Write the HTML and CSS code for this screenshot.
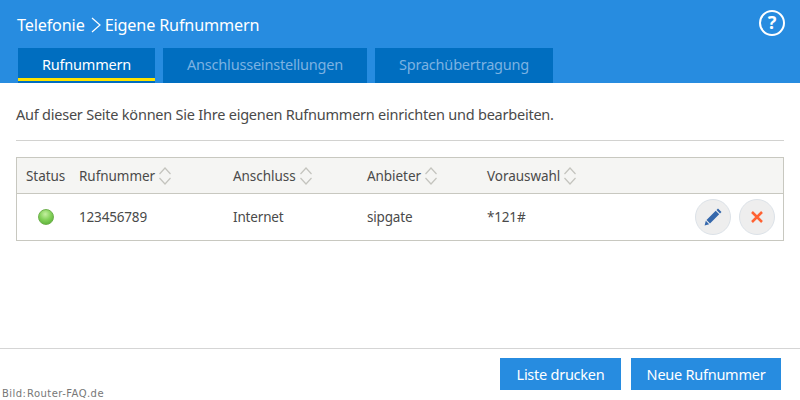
FILE: index.html
```html
<!DOCTYPE html>
<html lang="de">
<head>
<meta charset="utf-8">
<title>Eigene Rufnummern</title>
<link rel="stylesheet" href="styles.css">
</head>
<body>
<div class="page">
  <header class="header">
    <div class="title-row">
      <h1 class="title">Telefonie
        <svg class="crumb" width="12" height="18" viewBox="0 0 12 18"><path d="M3 2l8 7-8 7" fill="none" stroke="#fff" stroke-width="1.200"/></svg>
        Eigene Rufnummern</h1>
      <svg class="help" width="28" height="28" viewBox="0 0 28 28"><circle cx="14" cy="14" r="12" fill="none" stroke="#fff" stroke-width="2"/><text x="14" y="20" text-anchor="middle" class="help-mark">?</text></svg>
    </div>
    <nav class="tabs">
      <a class="tab tab-active tab-a">Rufnummern</a>
      <a class="tab tab-b">Anschlusseinstellungen</a>
      <a class="tab tab-c">Sprachübertragung</a>
    </nav>
  </header>
  <main class="content">
    <p class="intro">Auf dieser Seite können Sie Ihre eigenen Rufnummern einrichten und bearbeiten.</p>
    <div class="rule"></div>
    <div class="table">
      <div class="row row-head">
        <div class="cell c-status">Status</div>
        <div class="cell c-num">Rufnummer<svg class="sort" width="14" height="20" viewBox="0 0 14 20"><path d="M1.500 8l5.500-6 5.500 6M1.500 12l5.500 6 5.500-6" fill="none" stroke="#c4c4be" stroke-width="1.200"/></svg></div>
        <div class="cell c-port">Anschluss<svg class="sort" width="14" height="20" viewBox="0 0 14 20"><path d="M1.500 8l5.500-6 5.500 6M1.500 12l5.500 6 5.500-6" fill="none" stroke="#c4c4be" stroke-width="1.200"/></svg></div>
        <div class="cell c-prov">Anbieter<svg class="sort" width="14" height="20" viewBox="0 0 14 20"><path d="M1.500 8l5.500-6 5.500 6M1.500 12l5.500 6 5.500-6" fill="none" stroke="#c4c4be" stroke-width="1.200"/></svg></div>
        <div class="cell c-pre">Vorauswahl<svg class="sort" width="14" height="20" viewBox="0 0 14 20"><path d="M1.500 8l5.500-6 5.500 6M1.500 12l5.500 6 5.500-6" fill="none" stroke="#c4c4be" stroke-width="1.200"/></svg></div>
      </div>
      <div class="row row-body">
        <div class="cell c-status"><span class="led"></span></div>
        <div class="cell c-num">123456789</div>
        <div class="cell c-port">Internet</div>
        <div class="cell c-prov">sipgate</div>
        <div class="cell c-pre">*121#</div>
        <div class="actions">
          <span class="round"><svg class="pencil" width="20" height="20" viewBox="0 0 20 20"><path d="M15 1.500l3.500 3.500-1.500 1.500-3.500-3.500zM12.700 3.800l3.500 3.500-9.200 9.200-3.500-3.500z M2.800 13.800l3.400 3.400-4.600 1.200z" fill="#3568ac"/></svg></span>
          <span class="round"><svg width="14" height="14" viewBox="0 0 14 14"><path d="M2 2l10 10M12 2L2 12" stroke="#ff6233" stroke-width="2.500" fill="none"/></svg></span>
        </div>
      </div>
    </div>
  </main>
  <footer class="footer">
    <span class="credit">Bild: Router-FAQ.de</span>
    <button class="btn btn-print">Liste drucken</button>
    <button class="btn btn-new">Neue Rufnummer</button>
  </footer>
</div>
</body>
</html>
```
FILE: styles.css
```css
* { box-sizing: border-box; }
html, body { margin: 0; padding: 0; background: #fff; }
body { font-family: "Noto Sans", "Open Sans", sans-serif; font-size: 14px; color: #4a4a4a; }
.page { width: 800px; height: 400px; display: flex; flex-direction: column; overflow: hidden; }

.header { height: 83px; background: #278ce0; padding: 0 0 0 18px; display: flex; flex-direction: column; flex: none; }
.title-row { height: 48px; display: flex; align-items: flex-start; justify-content: space-between; padding: 9px 14px 0 0; }
.title { margin: 0 0 0 -1px; font-size: 16.200px; line-height: 32px; font-weight: 400; color: #fff; display: flex; align-items: center; gap: 4px; white-space: nowrap; letter-spacing: -0.150px; }
.crumb { flex: none; }
.help { flex: none; }
.help-mark { font-family: "Noto Sans", sans-serif; font-size: 18px; font-weight: 700; fill: #fff; }

.tabs { display: flex; gap: 8px; height: 35px; }
.tab { height: 35px; background: #006ec0; color: #7cb2e2; font-size: 14.500px; line-height: 32px; text-align: center; white-space: nowrap; letter-spacing: -0.200px; }
.tab-a { width: 137px; }
.tab-b { width: 204px; }
.tab-c { width: 178px; }
.tab-active { color: #fff; position: relative; }
.tab-active::after { content: ""; position: absolute; left: 0; right: 0; bottom: 2px; height: 3px; background: #fde300; }

.content { flex: 1; padding: 0 16px; }
.intro { margin: 0; padding-top: 21px; height: 57px; font-size: 14.500px; line-height: 20px; color: #4a4a4a; white-space: nowrap; letter-spacing: -0.230px; }
.rule { height: 1px; background: #d2d2d0; }
.table { margin-top: 16px; border: 1px solid #c8c8c0; height: 84px; }
.row { display: flex; align-items: center; }
.row-head { height: 36px; background: #f5f5f3; border-bottom: 1px solid #c8c8c0; }
.row-body { height: 46px; }
.cell { font-size: 13.500px; line-height: 20px; color: #4a4a4a; display: flex; align-items: center; white-space: nowrap; letter-spacing: -0.170px; }
.row-head .cell { letter-spacing: -0.050px; }
.sort { margin-left: 3px; flex: none; }
.c-status { width: 62px; padding-left: 9px; }
.c-num { width: 154px; }
.c-port { width: 134px; }
.c-prov { width: 120px; }
.c-pre { width: 120px; }
.led { width: 16px; height: 16px; margin-left: 12px; border-radius: 50%; background: radial-gradient(circle at 45% 30%, #c4f0a0 0%, #84d25a 45%, #4fa52e 100%); border: 1px solid #6eb04c; }
.actions { margin-left: auto; display: flex; gap: 8px; padding-right: 8px; }
.round { width: 36px; height: 36px; border-radius: 50%; background: #eeeeee; border: 1px solid #dce2e8; display: flex; align-items: center; justify-content: center; }

.footer { height: 52px; border-top: 1px solid #d5d5d5; display: flex; align-items: flex-start; justify-content: flex-end; gap: 10px; padding: 9px 19px 0 0; position: relative; flex: none; }
.btn { height: 32px; border: 0; background: #278ce0; color: #fff; font-family: inherit; font-size: 14.500px; padding: 0; letter-spacing: -0.250px; }
.btn-print { width: 121px; }
.btn-new { width: 150px; }
.credit { position: absolute; left: 2px; top: 38px; font-family: "DejaVu Sans", sans-serif; font-size: 10px; line-height: 13px; color: #777; word-spacing: -3px; letter-spacing: 0.450px; }
```
